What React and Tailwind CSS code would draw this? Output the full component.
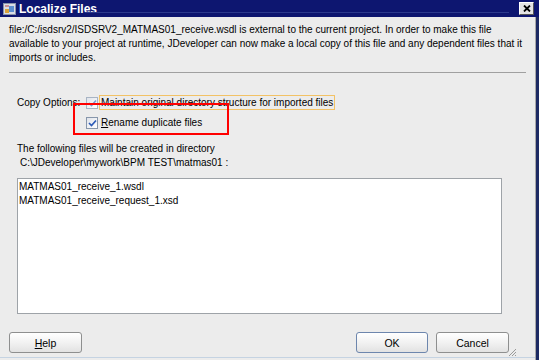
import React from 'react';

const font = { fontFamily: '"Liberation Sans", Arial, sans-serif' };

const Check = ({ faded }) => (
    <span className={`w-[12px] h-[12px] border ${faded ? 'border-[#a8b4c4]' : 'border-[#8796ab]'} bg-gradient-to-br from-[#dfe3ea] to-white flex items-center justify-center shrink-0`}>
        <svg width="9" height="8" viewBox="0 0 9 8">
            <path d="M1 4 L3.5 6.5 L8 1.5" fill="none" stroke={faded ? '#7d9bd0' : '#2c5bb7'} strokeWidth="1.7" />
        </svg>
    </span>
);

const Button = ({ children, primary, className = '' }) => (
    <button className={`h-[21px] rounded-[3px] border ${primary ? 'border-[#6d86ad]' : 'border-[#8e8f8f]'} bg-gradient-to-b from-white via-[#f2f2f2] to-[#e2e2e2] text-[10.5px] text-black flex items-center justify-center ${className}`}>
        {children}
    </button>
);

const App = () => {
    return (
        <div className="w-[539px] h-[360px] bg-[#1d2a63] overflow-hidden text-[10px] leading-[14px] text-black" style={font}>
            <div className="h-[17px] bg-[#0d1670] flex items-center pl-[3px] pr-[5px] relative">
                <div className="absolute left-[85px] right-[30px] top-[12px] h-px bg-[#2c3a8c]"></div>
                <svg width="13" height="12" viewBox="0 0 13 12" className="shrink-0">
                    <rect x="0.5" y="0.5" width="12" height="11" fill="#d8dde6" stroke="#8a93a8" />
                    <rect x="2" y="6" width="4" height="4" fill="#d9a23a" />
                    <rect x="6" y="3" width="5" height="6" fill="#5d8fd0" />
                    <path d="M2 3 L6 3" stroke="#b44" strokeWidth="1" />
                </svg>
                <span className="ml-[3px] text-white font-bold text-[12px]">Localize Files</span>
                <div className="flex-1"></div>
                <div className="w-[15px] h-[13px] bg-[#e4e4e4] border border-[#ffffff] border-r-[#555] border-b-[#555] flex items-center justify-center">
                    <svg width="8" height="7" viewBox="0 0 8 7">
                        <path d="M1 0.5 L7 6.5 M7 0.5 L1 6.5" stroke="#000" strokeWidth="1.8" />
                    </svg>
                </div>
            </div>

            <div className="w-[536px] h-[343px] bg-[#ececec] border-r border-[#a9a9a9] relative flex flex-col">
                <p className="mt-[6px] pl-[9px] whitespace-nowrap">
                    file:/C:/isdsrv2/ISDSRV2_MATMAS01_receive.wsdl is external to the current project. In order to make this file<br />
                    available to your project at runtime, JDeveloper can now make a local copy of this file and any dependent files that it<br />
                    imports or includes.
                </p>
                <div className="mt-[7px] mx-[9px] h-[2px] border-t border-[#a0a0a0] border-b-white"></div>

                <div className="mt-[21px] flex items-center h-[15px] whitespace-nowrap">
                    <span className="ml-[17px] w-[69px]">Copy Options:</span>
                    <Check faded />
                    <span className="ml-[1px] px-[1px] border border-[#f2c266] h-[15px] flex items-center">Maintain original directory structure for imported files</span>
                </div>
                <div className="mt-[5px] flex items-center h-[15px] whitespace-nowrap">
                    <span className="ml-[86px]"></span>
                    <Check />
                    <span className="ml-[3px]"><span className="underline">R</span>ename duplicate files</span>
                </div>

                <p className="mt-[12px] pl-[17px]">The following files will be created in directory</p>
                <p className="pl-[20px]">C:\JDeveloper\mywork\BPM TEST\matmas01 :</p>

                <div className="mt-[8px] ml-[17px] w-[485px] h-[136px] bg-white border border-[#9ea3a8] px-[1px] py-[1px]">
                    <div>MATMAS01_receive_1.wsdl</div>
                    <div>MATMAS01_receive_request_1.xsd</div>
                </div>

                <div className="mt-[18px] flex items-center">
                    <Button className="ml-[9px] w-[73px]"><span className="underline">H</span>elp</Button>
                    <div className="flex-1"></div>
                    <Button primary className="w-[72px]">OK</Button>
                    <Button className="ml-[8px] w-[73px] mr-[26px]">Cancel</Button>
                </div>

                <div className="absolute left-0 right-0 bottom-[2px] h-px bg-[#c5d3e2]"></div>
                <svg width="9" height="9" viewBox="0 0 9 9" className="absolute right-[18px] bottom-[3px]">
                    <path d="M8 1 L1 8 M8 4 L4 8 M8 7 L7 8" stroke="#9a9a9a" strokeWidth="1" />
                </svg>

                <div className="absolute left-[73px] top-[86px] w-[156px] h-[32px] border-2 border-[#ff0000]"></div>
            </div>
        </div>
    );
};

export default App;
